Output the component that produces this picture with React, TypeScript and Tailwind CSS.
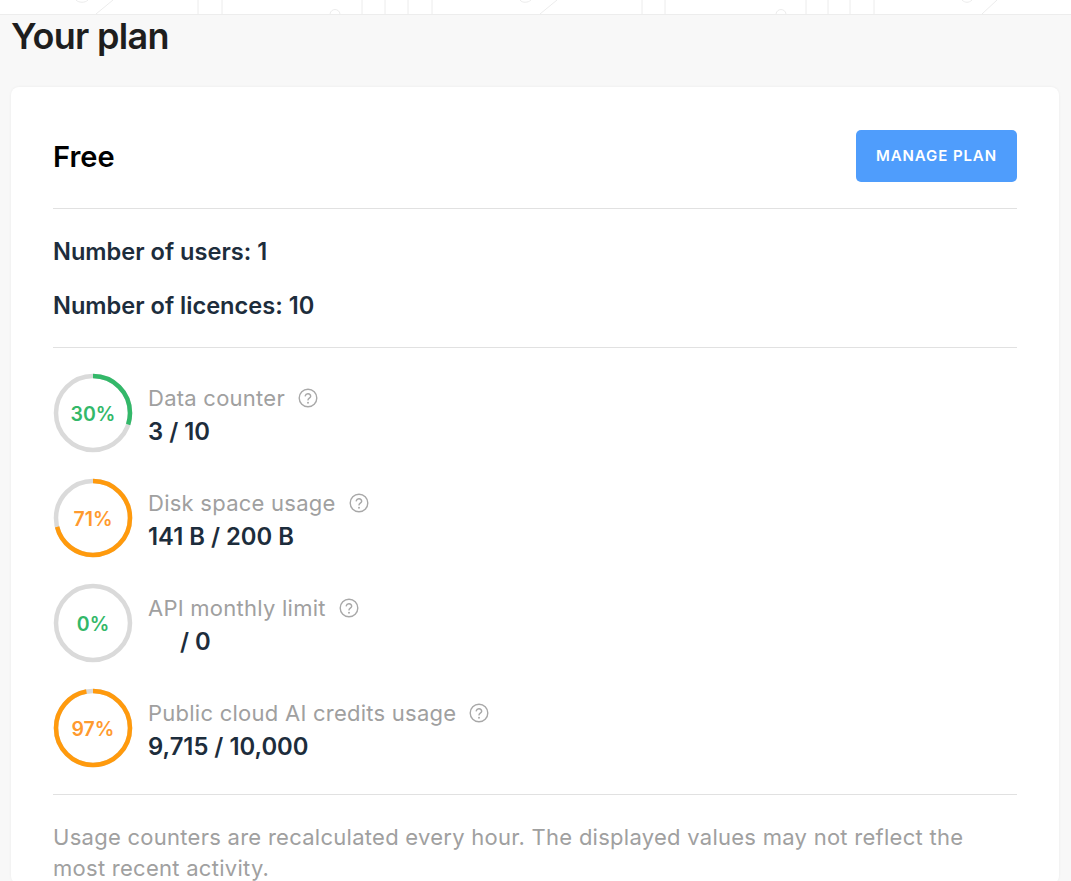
import React from "react";

const inter = "font-['Inter','Noto_Sans',sans-serif]";

interface UsageRowProps {
  readonly percent: number;
  readonly label: string;
  readonly value: string;
  readonly tone: "green" | "orange";
  readonly indent?: boolean;
}

const Ring: React.FC<{ percent: number; tone: "green" | "orange" }> = ({ percent, tone }) => {
  const r = 37;
  const c = 2 * Math.PI * r;
  const stroke = tone === "green" ? "#33b869" : "#ff9a0d";
  return (
    <div className="relative h-[80px] w-[80px] shrink-0">
      <svg width="80" height="80" viewBox="0 0 80 80">
        <circle cx="40" cy="40" r={r} fill="none" stroke="#dadada" strokeWidth="4.5" />
        {percent > 0 && (
          <circle
            cx="40"
            cy="40"
            r={r}
            fill="none"
            stroke={stroke}
            strokeWidth="4.5"
            strokeDasharray={`${(c * percent) / 100} ${c}`}
            transform="rotate(-90 40 40)"
          />
        )}
      </svg>
      <div
        className={`absolute inset-0 flex items-center justify-center pt-[3px] text-[19.5px] font-semibold ${
          tone === "green" ? "text-[#33b869]" : "text-[#ff9a2e]"
        }`}
      >
        {percent}%
      </div>
    </div>
  );
};

const HelpIcon = () => (
  <svg width="20" height="20" viewBox="0 0 20 20" fill="none" stroke="#a8a8a8" strokeWidth="1.4" strokeLinecap="round">
    <circle cx="10" cy="10" r="8.8" />
    <path d="M7.2 7.9a2.8 2.8 0 0 1 5.5.4c0 1.7-2.7 2-2.7 3.6" />
    <path d="M10 14.6v.1" strokeWidth="1.9" />
  </svg>
);

const UsageRow: React.FC<UsageRowProps> = ({ percent, label, value, tone, indent }) => (
  <div className="flex h-[80px] items-center">
    <Ring percent={percent} tone={tone} />
    <div className="mt-[4px] ml-[15px]">
      <div className="flex h-[32px] items-center">
        <span className="text-[22px] tracking-[0.25px] text-[#a0a0a0]">{label}</span>
        <span className="ml-[13px]">
          <HelpIcon />
        </span>
      </div>
      <div className={`h-[34px] pt-[1px] text-[23.8px] leading-[34px] font-semibold text-[#1d2d3c] ${indent ? "pl-[32px]" : ""}`}>
        {value}
      </div>
    </div>
  </div>
);

const TopPattern = () => (
  <svg className="block h-[14px] w-full" viewBox="0 0 1071 14" fill="none" stroke="#ececec" strokeWidth="1">
    <path d="M76 0 C79 3 85 3 88 0 M113 0 L96 14 M198 0V14 M222 0V14 M330 14 C331 8 339 8 340 14 M362 0V14 M385 0V14 M408 0V14 M432 0V14" />
    <path d="M520 0 C522 3 528 3 531 0 M557 0 L540 14 M642 0V14 M665 0V14 M776 14 C777 8 785 8 786 14 M806 0V14 M828 0V14 M850 0V14 M874 0V14 M962 0 C965 3 969 3 972 0 M997 0 L982 14" />
  </svg>
);

export default function App() {
  return (
    <div className={`h-[881px] overflow-hidden bg-[#f8f8f8] ${inter}`}>
      <div className="border-b border-[#ededed] bg-white">
        <TopPattern />
      </div>
      <div className="pr-[12px] pl-[11px]">
        <h1 className="h-[72px] pt-[1px] text-[36px] leading-[40px] font-semibold tracking-[-0.7px] text-[#1e1e1e]">
          Your plan
        </h1>
        <section className="rounded-[8px] bg-white px-[42px] pt-[43px] shadow-[0_0_3px_rgba(0,0,0,0.06)]">
          <div className="flex h-[79px] items-start justify-between border-b border-[#e1e1e1]">
            <h2 className="mt-[8px] text-[29px] leading-[38px] font-semibold text-black">Free</h2>
            <button className="h-[52px] w-[161px] rounded-[5px] bg-[#4f9dfc] pt-[1px] text-[15px] font-semibold tracking-[0.9px] text-white">
              MANAGE PLAN
            </button>
          </div>
          <div className="border-b border-[#e1e1e1] pt-[27px] pb-[25px] text-[23.6px] leading-[32px] font-semibold text-[#1d2d3c]">
            <p>Number of users: 1</p>
            <p className="mt-[22px]">Number of licences: 10</p>
          </div>
          <div className="flex flex-col gap-[25px] border-b border-[#e1e1e1] pt-[25px] pb-[26px]">
            <UsageRow percent={30} label="Data counter" value="3 / 10" tone="green" />
            <UsageRow percent={71} label="Disk space usage" value="141 B / 200 B" tone="orange" />
            <UsageRow percent={0} label="API monthly limit" value="/ 0" tone="green" indent />
            <UsageRow percent={97} label="Public cloud AI credits usage" value="9,715 / 10,000" tone="orange" />
          </div>
          <p className="max-w-[930px] pt-[27px] text-[22px] leading-[31px] tracking-[0.27px] text-[#a0a0a0]">
            Usage counters are recalculated every hour. The displayed values may not reflect the most recent activity.
          </p>
        </section>
      </div>
    </div>
  );
}
